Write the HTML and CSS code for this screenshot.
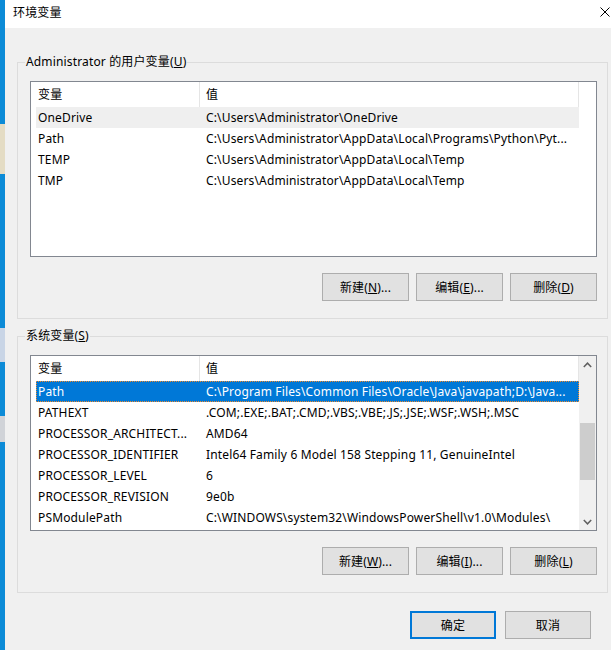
FILE: index.html
```html
<!DOCTYPE html>
<html lang="zh-CN">
<head>
    <meta charset="UTF-8">
    <title>环境变量</title>
    <link rel="stylesheet" href="styles.css">
</head>
<body>
    <div class="screen">
        <div class="desktop">
            <span class="icon icon-a"></span>
            <span class="icon icon-b"></span>
            <span class="icon icon-c"></span>
        </div>

        <div class="dialog">
            <div class="titlebar">
                <span class="title">环境变量</span>
                <svg class="close" width="10" height="10" viewBox="0 0 10 10">
                    <path d="M0.5 0.5 L9.5 9.5 M9.5 0.5 L0.5 9.5" stroke="#000" stroke-width="1" fill="none"/>
                </svg>
            </div>

            <div class="content">
                <!-- User variables -->
                <div class="group">
                    <div class="group-title">Administrator 的用户变量(<u>U</u>)</div>
                    <div class="list">
                        <div class="list-main">
                            <div class="list-head">
                                <div class="head-cell hc-name">变量</div>
                                <div class="head-cell hc-value">值</div>
                            </div>
                            <div class="row inactive">
                                <div class="cell-name">OneDrive</div>
                                <div class="cell-value">C:\Users\Administrator\OneDrive</div>
                            </div>
                            <div class="row">
                                <div class="cell-name">Path</div>
                                <div class="cell-value">C:\Users\Administrator\AppData\Local\Programs\Python\Pyt...</div>
                            </div>
                            <div class="row">
                                <div class="cell-name">TEMP</div>
                                <div class="cell-value">C:\Users\Administrator\AppData\Local\Temp</div>
                            </div>
                            <div class="row">
                                <div class="cell-name">TMP</div>
                                <div class="cell-value">C:\Users\Administrator\AppData\Local\Temp</div>
                            </div>
                        </div>
                    </div>
                    <div class="buttons">
                        <button class="btn">新建(<u>N</u>)...</button>
                        <button class="btn">编辑(<u>E</u>)...</button>
                        <button class="btn">删除(<u>D</u>)</button>
                    </div>
                </div>

                <!-- System variables -->
                <div class="group group-system">
                    <div class="group-title">系统变量(<u>S</u>)</div>
                    <div class="list">
                        <div class="list-main">
                            <div class="list-head">
                                <div class="head-cell hc-name">变量</div>
                                <div class="head-cell hc-value">值</div>
                            </div>
                            <div class="row selected">
                                <div class="cell-name">Path</div>
                                <div class="cell-value">C:\Program Files\Common Files\Oracle\Java\javapath;D:\Java...</div>
                            </div>
                            <div class="row">
                                <div class="cell-name">PATHEXT</div>
                                <div class="cell-value">.COM;.EXE;.BAT;.CMD;.VBS;.VBE;.JS;.JSE;.WSF;.WSH;.MSC</div>
                            </div>
                            <div class="row">
                                <div class="cell-name">PROCESSOR_ARCHITECT...</div>
                                <div class="cell-value">AMD64</div>
                            </div>
                            <div class="row">
                                <div class="cell-name">PROCESSOR_IDENTIFIER</div>
                                <div class="cell-value">Intel64 Family 6 Model 158 Stepping 11, GenuineIntel</div>
                            </div>
                            <div class="row">
                                <div class="cell-name">PROCESSOR_LEVEL</div>
                                <div class="cell-value">6</div>
                            </div>
                            <div class="row">
                                <div class="cell-name">PROCESSOR_REVISION</div>
                                <div class="cell-value">9e0b</div>
                            </div>
                            <div class="row">
                                <div class="cell-name">PSModulePath</div>
                                <div class="cell-value">C:\WINDOWS\system32\WindowsPowerShell\v1.0\Modules\</div>
                            </div>
                        </div>
                        <div class="scrollbar">
                            <div class="sb-arrow">
                                <svg width="9" height="6" viewBox="0 0 9 6"><path d="M0.8 5 L4.5 1.2 L8.2 5" stroke="#606060" stroke-width="1.5" fill="none"/></svg>
                            </div>
                            <div class="sb-track">
                                <div class="sb-thumb"></div>
                            </div>
                            <div class="sb-arrow">
                                <svg width="9" height="6" viewBox="0 0 9 6"><path d="M0.8 1 L4.5 4.8 L8.2 1" stroke="#606060" stroke-width="1.5" fill="none"/></svg>
                            </div>
                        </div>
                    </div>
                    <div class="buttons">
                        <button class="btn">新建(<u>W</u>)...</button>
                        <button class="btn">编辑(<u>I</u>)...</button>
                        <button class="btn">删除(<u>L</u>)</button>
                    </div>
                </div>

                <div class="footer">
                    <button class="btn btn-default">确定</button>
                    <button class="btn">取消</button>
                </div>
            </div>
        </div>
    </div>
</body>
</html>
```

FILE: styles.css
```css
body {
    margin: 0;
    background: #f0f0f0;
    font-family: "Noto Sans", "Noto Sans CJK SC", sans-serif;
    font-size: 12px;
    letter-spacing: 0.15px;
    color: #000;
}
.screen {
    display: flex;
    height: 650px;
    overflow: hidden;
}
.desktop {
    width: 5px;
    flex-shrink: 0;
    background: #0c8bd7;
    display: flex;
    flex-direction: column;
}
.icon {
    display: block;
    background: #d9dde3;
}
.icon-a {
    margin-top: 124px;
    height: 50px;
    background: #e4dcc4;
}
.icon-b {
    margin-top: 154px;
    height: 34px;
    background: #c9d5e6;
}
.icon-c {
    margin-top: 54px;
    height: 26px;
    background: #d0d3d8;
}
.dialog {
    width: 606px;
    flex-shrink: 0;
    background: #f0f0f0;
}
.titlebar {
    height: 28px;
    background: #fff;
    display: flex;
    align-items: center;
    justify-content: space-between;
    padding-left: 8px;
}
.title {
    line-height: 16px;
    margin-top: -3px;
}
.close {
    margin-right: 1px;
    margin-top: -4px;
}
.content {
    padding: 34px 0 0 12px;
}
.group {
    position: relative;
    width: 591px;
    box-sizing: border-box;
    border: 1px solid #dcdcdc;
    padding: 18px 10px 17px 12px;
}
.group-system {
    margin-top: 17px;
}
.group-title {
    position: absolute;
    top: -9px;
    left: 7px;
    padding: 0 1px;
    line-height: 16px;
    background: #f0f0f0;
}
.list {
    height: 176px;
    box-sizing: border-box;
    border: 1px solid #828790;
    background: #fff;
    display: flex;
}
.list-main {
    width: 548px;
}
.list-head {
    display: flex;
    height: 25px;
}
.head-cell {
    box-sizing: border-box;
    border-right: 1px solid #e5e5e5;
    line-height: 25px;
    padding-left: 7px;
}
.hc-name {
    width: 169px;
}
.hc-value {
    width: 379px;
    padding-left: 6px;
}
.row {
    display: flex;
    height: 21px;
    line-height: 21px;
    margin-left: 5px;
    width: 543px;
    box-sizing: border-box;
}
.row.inactive {
    background: #efefef;
}
.row.selected {
    background: #0078d7;
    color: #fff;
    outline: 1px dotted #f08a2c;
    outline-offset: -1px;
}
.cell-name {
    width: 164px;
    flex-shrink: 0;
    padding-left: 2px;
    box-sizing: border-box;
    white-space: nowrap;
    overflow: hidden;
}
.cell-value {
    flex: 1;
    padding-left: 6px;
    white-space: nowrap;
    overflow: hidden;
}
.scrollbar {
    width: 17px;
    background: #f0f0f0;
    display: flex;
    flex-direction: column;
}
.sb-arrow {
    height: 17px;
    display: flex;
    align-items: center;
    justify-content: center;
}
.sb-track {
    flex: 1;
}
.sb-thumb {
    margin: 50px 1px 0 1px;
    height: 57px;
    background: #cdcdcd;
}
.buttons {
    display: flex;
    justify-content: flex-end;
    gap: 7px;
    margin-top: 16px;
}
.btn {
    width: 87px;
    height: 28px;
    box-sizing: border-box;
    border: 1px solid #adadad;
    background: #e1e1e1;
    font: inherit;
    letter-spacing: inherit;
    color: #000;
    padding: 0;
}
.footer .btn {
    width: 86px;
}
.btn-default {
    border: 2px solid #0078d7;
}
.footer {
    width: 591px;
    box-sizing: border-box;
    display: flex;
    justify-content: flex-end;
    gap: 9px;
    padding-right: 17px;
    margin-top: 18px;
}
```
